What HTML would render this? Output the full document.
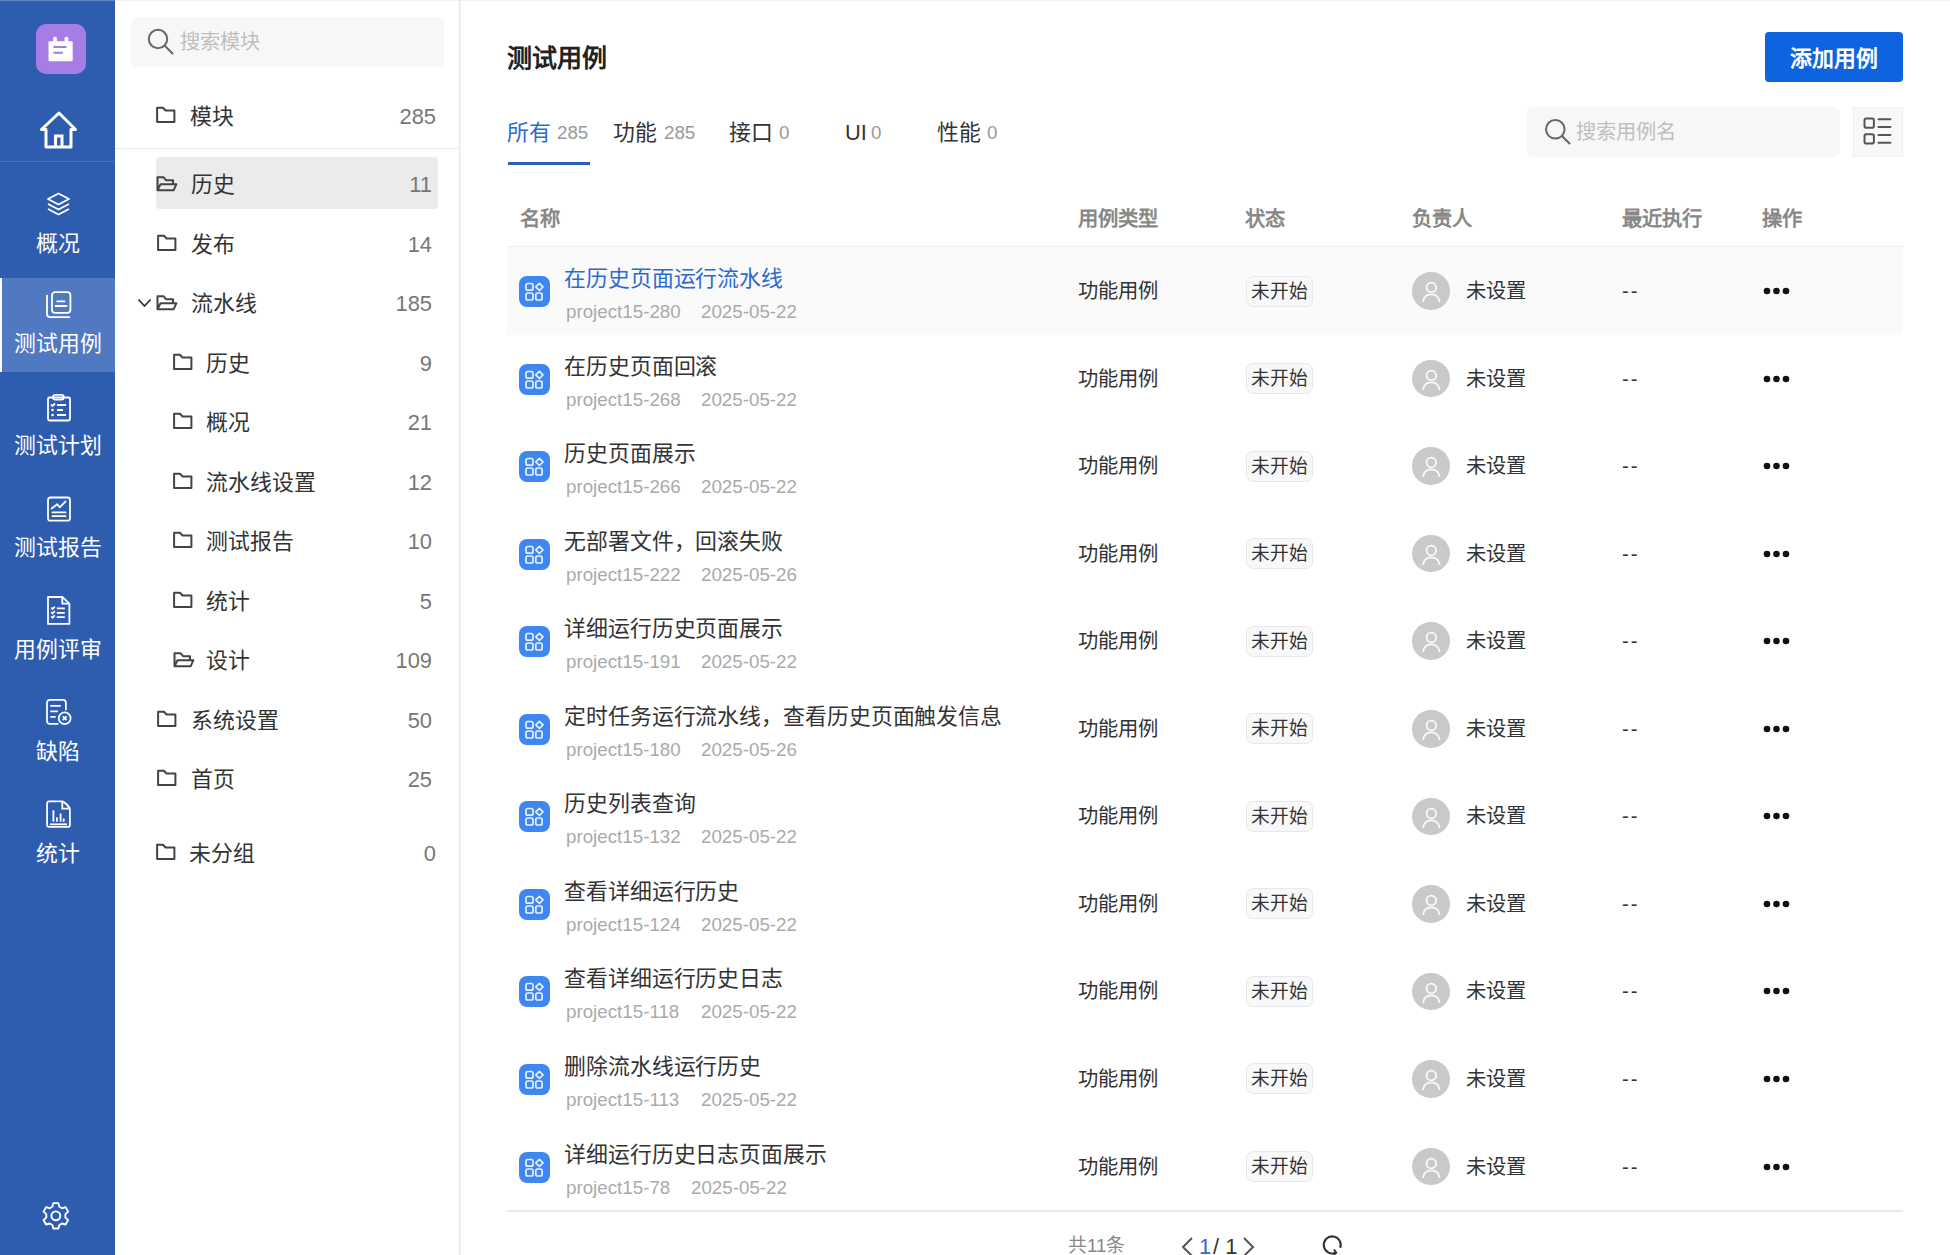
<!DOCTYPE html>
<html lang="zh-CN"><head><meta charset="utf-8"><title>测试用例</title>
<style>
*{box-sizing:border-box;margin:0;padding:0}
html,body{width:1950px;height:1255px;overflow:hidden;background:#fff;font-family:"Liberation Sans",sans-serif;color:#333}
.a{position:absolute;white-space:nowrap}
.t14{font-size:21.875px;line-height:21.875px}
.t13{font-size:20.3125px;line-height:20.3125px}
.t12{font-size:18.75px;line-height:18.75px}
svg{position:absolute;overflow:visible}
</style></head><body>
<div class="a" style="left:0;top:0;width:115px;height:1255px;background:#2e5db0"></div>
<div class="a" style="left:36px;top:24px;width:50px;height:50px;border-radius:10px;background:#a67de4"></div>
<svg style="left:36px;top:24px" width="50" height="50" viewBox="0 0 50 50">
<rect x="12.5" y="17.2" width="24.2" height="20" rx="1.2" fill="#fff"/>
<rect x="17.2" y="12.8" width="3.7" height="6" rx="1.5" fill="#fff"/><rect x="28.6" y="12.8" width="3.7" height="6" rx="1.5" fill="#fff"/>
<rect x="17.2" y="21.9" width="13.6" height="2" rx="1" fill="#a080d0"/><rect x="17.2" y="27.8" width="9.9" height="2" rx="1" fill="#a080d0"/>
</svg>
<svg style="left:39.5px;top:111px" width="38" height="38" viewBox="0 0 38 38">
<path d="M19 2 L35.5 18.5 H31 V36 H6 V18.5 H1.5 Z" fill="none" stroke="#fff" stroke-width="3" stroke-linejoin="round"/>
<path d="M15.5 36 V25 H22 V36" fill="none" stroke="#fff" stroke-width="3"/>
</svg>
<div class="a" style="left:0;top:161px;width:115px;height:1px;background:rgba(255,255,255,0.12)"></div>
<div class="a" style="left:0;top:278px;width:115px;height:94px;background:#5179c1"></div>
<div class="a" style="left:0;top:278px;width:2px;height:94px;background:#fff"></div>
<div class="a t14" style="left:0;width:115px;text-align:center;top:232.5px;color:#fff">概况</div>
<div class="a t14" style="left:0;width:115px;text-align:center;top:332.5px;color:#fff">测试用例</div>
<div class="a t14" style="left:0;width:115px;text-align:center;top:434.5px;color:#fff">测试计划</div>
<div class="a t14" style="left:0;width:115px;text-align:center;top:536.5px;color:#fff">测试报告</div>
<div class="a t14" style="left:0;width:115px;text-align:center;top:638.5px;color:#fff">用例评审</div>
<div class="a t14" style="left:0;width:115px;text-align:center;top:740.5px;color:#fff">缺陷</div>
<div class="a t14" style="left:0;width:115px;text-align:center;top:842.5px;color:#fff">统计</div>
<svg style="left:46px;top:191.7px" width="25" height="25" viewBox="0 0 25 25">
<path d="M12.5 1.5 L23 7 L12.5 12.5 L2 7 Z" fill="none" stroke="#fff" stroke-width="1.8" stroke-linejoin="round"/>
<path d="M2 12 L12.5 17.5 L23 12" fill="none" stroke="#fff" stroke-width="1.8" stroke-linejoin="round"/>
<path d="M2 17 L12.5 22.5 L23 17" fill="none" stroke="#fff" stroke-width="1.8" stroke-linejoin="round"/>
</svg>
<svg style="left:46px;top:290px" width="27" height="30" viewBox="0 0 27 30">
<rect x="6" y="2.1" width="18.4" height="20.8" rx="3.2" fill="none" stroke="#fff" stroke-width="1.8" stroke-width="2.1"/>
<path d="M1 5.6 V24 Q1 27.2 4.2 27.2 H23.3" fill="none" stroke="#fff" stroke-width="1.8" stroke-width="2.1" stroke-linecap="round"/>
<path d="M11.2 11.3 H18.5 M9.6 16 H20.5" fill="none" stroke="#fff" stroke-width="1.8" stroke-width="2.1" stroke-linecap="round"/>
</svg>
<svg style="left:46px;top:393px" width="26" height="29" viewBox="0 0 26 29">
<rect x="2" y="4.5" width="22" height="23" rx="1.5" fill="none" stroke="#fff" stroke-width="1.8"/>
<rect x="7.1" y="1.8" width="10.7" height="4.8" rx="2.3" fill="none" stroke="#fff" stroke-width="1.8" stroke-width="2"/>
<path d="M11 12 H20 M11 17 H17 M11 22 H20" fill="none" stroke="#fff" stroke-width="1.8"/>
<path d="M5 11.5 L6.5 13 L9 10.5" fill="none" stroke="#fff" stroke-width="1.8" stroke-width="1.6"/>
<circle cx="6.5" cy="17" r="1.3" fill="#fff"/><circle cx="6.5" cy="22" r="1.3" fill="#fff"/>
</svg>
<svg style="left:46px;top:496px" width="26" height="27" viewBox="0 0 26 27">
<rect x="2" y="1.5" width="22" height="23.2" rx="2.5" fill="none" stroke="#fff" stroke-width="1.8"/>
<path d="M5.6 12.5 L11.3 8.2 L13.7 11.3 L19.5 5.5" fill="none" stroke="#fff" stroke-width="1.8" stroke-linecap="round" stroke-linejoin="round"/>
<path d="M6.5 16.4 H19.5 M6.5 20.2 H19.5" fill="none" stroke="#fff" stroke-width="1.8" stroke-linecap="round"/>
</svg>
<svg style="left:46px;top:595px" width="26" height="31" viewBox="0 0 26 31">
<path d="M2 2 H16.3 L23.4 8.6 V28.9 H2 Z" fill="none" stroke="#fff" stroke-width="1.8" stroke-linejoin="round"/>
<path d="M16.3 2 V8.6 H23.4" fill="none" stroke="#fff" stroke-width="1.8" stroke-width="1.6"/>
<path d="M10.8 13.3 H18.8 M10.8 17.8 H18.8 M10.8 22.1 H18.8" fill="none" stroke="#fff" stroke-width="1.8"/>
<path d="M5.2 12.6 L6.6 14 L8.8 11.6 M5.2 17.1 L6.6 18.5 L8.8 16.1 M5.2 21.4 L6.6 22.8 L8.8 20.4" fill="none" stroke="#fff" stroke-width="1.8" stroke-width="1.4"/>
</svg>
<svg style="left:46px;top:698px" width="28" height="29" viewBox="0 0 28 29">
<path d="M12.4 25.9 H4 Q1 25.9 1 22.9 V4.9 Q1 1.9 4 1.9 H16.9 Q19.9 1.9 19.9 4.9 V12.2" fill="none" stroke="#fff" stroke-width="1.8"/>
<path d="M5 7.9 H14 M5 13.3 H11.3 M5 18.9 H9" fill="none" stroke="#fff" stroke-width="1.8" stroke-width="2" stroke-linecap="round"/>
<circle cx="18.7" cy="20.2" r="5.9" fill="none" stroke="#fff" stroke-width="1.8"/>
<path d="M16.8 18.3 L20.6 22.1 M20.6 18.3 L16.8 22.1" fill="none" stroke="#fff" stroke-width="1.8" stroke-width="1.6"/>
</svg>
<svg style="left:46px;top:799px" width="26" height="30" viewBox="0 0 26 30">
<path d="M1.1 4.4 Q1.1 2.4 3.1 2.4 H16.3 Q21 4.5 23.9 9.7 V25.9 Q23.9 27.9 21.9 27.9 H3.1 Q1.1 27.9 1.1 25.9 Z" fill="none" stroke="#fff" stroke-width="1.8" stroke-linejoin="round"/>
<path d="M16.3 2.4 V9.7 H23.9" fill="none" stroke="#fff" stroke-width="1.8" stroke-width="1.6"/>
<path d="M7.4 11.3 V22.7 M10.9 18.3 V22.7 M14.6 14.4 V22.7 M17.7 19.5 V22.7" fill="none" stroke="#fff" stroke-width="1.8" stroke-width="2.4"/>
<path d="M3.9 25.3 H21.1" fill="none" stroke="#fff" stroke-width="1.8" stroke-width="2.4"/>
</svg>
<svg style="left:41.45px;top:1201.45px" width="29.7" height="29.7" viewBox="0 0 28 28">
<path d="M11.6 2 H16.4 L17.3 5.4 L19.8 6.8 L23.2 5.8 L25.6 10 L23 12.4 V15.6 L25.6 18 L23.2 22.2 L19.8 21.2 L17.3 22.6 L16.4 26 H11.6 L10.7 22.6 L8.2 21.2 L4.8 22.2 L2.4 18 L5 15.6 V12.4 L2.4 10 L4.8 5.8 L8.2 6.8 L10.7 5.4 Z" fill="none" stroke="#fff" stroke-width="1.8" stroke-linejoin="round"/>
<circle cx="14" cy="14" r="4.2" fill="none" stroke="#fff" stroke-width="1.8"/>
</svg>
<div class="a" style="left:459px;top:0;width:1px;height:1255px;background:#e4e4e4"></div><div class="a" style="left:460px;top:0;width:1px;height:1255px;background:#f5f5f5"></div>
<div class="a" style="left:131px;top:17px;width:313px;height:50px;border-radius:6px;background:#f7f7f7"></div>
<svg style="left:146px;top:27px" width="30" height="30" viewBox="0 0 30 30">
<circle cx="12" cy="12" r="9.2" fill="none" stroke="#666" stroke-width="2" stroke-width="1.8"/><path d="M18.8 18.8 L26.5 26.5" fill="none" stroke="#666" stroke-width="2" stroke-width="1.9" stroke-linecap="round"/>
</svg>
<div class="a t13" style="left:180px;top:32px;color:#bfbfbf">搜索模块</div>
<div class="a" style="left:115px;top:148px;width:344px;height:1px;background:#e8e8e8"></div>
<div class="a" style="left:156px;top:157px;width:282px;height:52px;border-radius:4px;background:#ebebeb"></div>
<svg style="left:156px;top:107px" width="21" height="17" viewBox="0 0 21 17"><path d="M1.1 0.8 H7 L9.5 3.5 H18.4 V15 H1.1 Z" fill="none" stroke="#444" stroke-width="2" stroke-linejoin="round"/></svg>
<div class="a t14" style="left:190px;top:105.5px;color:#333">模块</div>
<div class="a t14" style="right:1514px;top:105.5px;color:#777">285</div>
<svg style="left:156px;top:175px" width="22" height="17" viewBox="0 0 22 17"><path d="M1.5 15.2 V2.2 H7.5 L10 5.2 H17 V9.2 M1.5 15.2 L4.5 9.2 H20.4 L17.7 15.2 Z" fill="none" stroke="#444" stroke-width="2" stroke-linejoin="round"/></svg>
<div class="a t14" style="left:191px;top:173.5px;color:#333">历史</div>
<div class="a t14" style="right:1518px;top:173.5px;color:#777">11</div>
<svg style="left:157px;top:235px" width="21" height="17" viewBox="0 0 21 17"><path d="M1.1 0.8 H7 L9.5 3.5 H18.4 V15 H1.1 Z" fill="none" stroke="#444" stroke-width="2" stroke-linejoin="round"/></svg>
<div class="a t14" style="left:191px;top:233.5px;color:#333">发布</div>
<div class="a t14" style="right:1518px;top:233.5px;color:#777">14</div>
<svg style="left:156px;top:294px" width="22" height="17" viewBox="0 0 22 17"><path d="M1.5 15.2 V2.2 H7.5 L10 5.2 H17 V9.2 M1.5 15.2 L4.5 9.2 H20.4 L17.7 15.2 Z" fill="none" stroke="#444" stroke-width="2" stroke-linejoin="round"/></svg>
<div class="a t14" style="left:191px;top:292.5px;color:#333">流水线</div>
<div class="a t14" style="right:1518px;top:292.5px;color:#777">185</div>
<svg style="left:137px;top:298px" width="15" height="10" viewBox="0 0 15 10"><path d="M1.5 1.5 L7.5 8 L13.5 1.5" fill="none" stroke="#333" stroke-width="1.8"/></svg>
<svg style="left:173px;top:354px" width="21" height="17" viewBox="0 0 21 17"><path d="M1.1 0.8 H7 L9.5 3.5 H18.4 V15 H1.1 Z" fill="none" stroke="#444" stroke-width="2" stroke-linejoin="round"/></svg>
<div class="a t14" style="left:206px;top:352.5px;color:#333">历史</div>
<div class="a t14" style="right:1518px;top:352.5px;color:#777">9</div>
<svg style="left:173px;top:413px" width="21" height="17" viewBox="0 0 21 17"><path d="M1.1 0.8 H7 L9.5 3.5 H18.4 V15 H1.1 Z" fill="none" stroke="#444" stroke-width="2" stroke-linejoin="round"/></svg>
<div class="a t14" style="left:206px;top:411.5px;color:#333">概况</div>
<div class="a t14" style="right:1518px;top:411.5px;color:#777">21</div>
<svg style="left:173px;top:473px" width="21" height="17" viewBox="0 0 21 17"><path d="M1.1 0.8 H7 L9.5 3.5 H18.4 V15 H1.1 Z" fill="none" stroke="#444" stroke-width="2" stroke-linejoin="round"/></svg>
<div class="a t14" style="left:206px;top:471.5px;color:#333">流水线设置</div>
<div class="a t14" style="right:1518px;top:471.5px;color:#777">12</div>
<svg style="left:173px;top:532px" width="21" height="17" viewBox="0 0 21 17"><path d="M1.1 0.8 H7 L9.5 3.5 H18.4 V15 H1.1 Z" fill="none" stroke="#444" stroke-width="2" stroke-linejoin="round"/></svg>
<div class="a t14" style="left:206px;top:530.5px;color:#333">测试报告</div>
<div class="a t14" style="right:1518px;top:530.5px;color:#777">10</div>
<svg style="left:173px;top:592px" width="21" height="17" viewBox="0 0 21 17"><path d="M1.1 0.8 H7 L9.5 3.5 H18.4 V15 H1.1 Z" fill="none" stroke="#444" stroke-width="2" stroke-linejoin="round"/></svg>
<div class="a t14" style="left:206px;top:590.5px;color:#333">统计</div>
<div class="a t14" style="right:1518px;top:590.5px;color:#777">5</div>
<svg style="left:173px;top:651px" width="22" height="17" viewBox="0 0 22 17"><path d="M1.5 15.2 V2.2 H7.5 L10 5.2 H17 V9.2 M1.5 15.2 L4.5 9.2 H20.4 L17.7 15.2 Z" fill="none" stroke="#444" stroke-width="2" stroke-linejoin="round"/></svg>
<div class="a t14" style="left:206px;top:649.5px;color:#333">设计</div>
<div class="a t14" style="right:1518px;top:649.5px;color:#777">109</div>
<svg style="left:157px;top:711px" width="21" height="17" viewBox="0 0 21 17"><path d="M1.1 0.8 H7 L9.5 3.5 H18.4 V15 H1.1 Z" fill="none" stroke="#444" stroke-width="2" stroke-linejoin="round"/></svg>
<div class="a t14" style="left:191px;top:709.5px;color:#333">系统设置</div>
<div class="a t14" style="right:1518px;top:709.5px;color:#777">50</div>
<svg style="left:157px;top:770px" width="21" height="17" viewBox="0 0 21 17"><path d="M1.1 0.8 H7 L9.5 3.5 H18.4 V15 H1.1 Z" fill="none" stroke="#444" stroke-width="2" stroke-linejoin="round"/></svg>
<div class="a t14" style="left:191px;top:768.5px;color:#333">首页</div>
<div class="a t14" style="right:1518px;top:768.5px;color:#777">25</div>
<svg style="left:156px;top:844px" width="21" height="17" viewBox="0 0 21 17"><path d="M1.1 0.8 H7 L9.5 3.5 H18.4 V15 H1.1 Z" fill="none" stroke="#444" stroke-width="2" stroke-linejoin="round"/></svg>
<div class="a t14" style="left:189px;top:842.5px;color:#333">未分组</div>
<div class="a t14" style="right:1514px;top:842.5px;color:#777">0</div>
<div class="a" style="left:0;top:0;width:1950px;height:1px;background:rgba(216,216,216,0.32)"></div>
<div class="a" style="left:507px;top:45.75px;font-size:25px;line-height:25px;font-weight:bold;color:#222">测试用例</div>
<div class="a t14" style="left:1765px;top:31.5px;width:138px;height:50px;line-height:54px;text-align:center;background:#0d64de;border-radius:4px;color:#fff;font-weight:bold">添加用例</div>
<div class="a t14" style="left:507px;top:121.5px;color:#2c6ad0">所有</div>
<div class="a t12" style="left:557px;top:123.5px;color:#999">285</div>
<div class="a t14" style="left:613px;top:121.5px;color:#333">功能</div>
<div class="a t12" style="left:664px;top:123.5px;color:#999">285</div>
<div class="a t14" style="left:729px;top:121.5px;color:#333">接口</div>
<div class="a t12" style="left:779px;top:123.5px;color:#999">0</div>
<div class="a t14" style="left:845px;top:121.5px;color:#333">UI</div>
<div class="a t12" style="left:871px;top:123.5px;color:#999">0</div>
<div class="a t14" style="left:937px;top:121.5px;color:#333">性能</div>
<div class="a t12" style="left:987px;top:123.5px;color:#999">0</div>
<div class="a" style="left:507.5px;top:162.3px;width:82px;height:3px;background:#2c5fb3"></div>
<div class="a" style="left:1527px;top:107px;width:313px;height:50px;border-radius:6px;background:#f7f7f7"></div>
<svg style="left:1543px;top:117px" width="30" height="30" viewBox="0 0 30 30">
<circle cx="12.3" cy="12.3" r="9.3" fill="none" stroke="#666" stroke-width="2" stroke-width="1.9"/><path d="M19.2 19.2 L26.5 26.5" fill="none" stroke="#666" stroke-width="2" stroke-width="2" stroke-linecap="round"/>
</svg>
<div class="a t13" style="left:1576px;top:122px;color:#bfbfbf">搜索用例名</div>
<div class="a" style="left:1853px;top:107px;width:50px;height:50px;background:#f8f8f8;border:1px solid #f0f0f0"></div>
<svg style="left:1863px;top:118px" width="29" height="28" viewBox="0 0 29 28">
<rect x="1.5" y="0.4" width="9.4" height="9.3" rx="1.8" fill="none" stroke="#555" stroke-width="2"/><rect x="1.5" y="16.2" width="9.4" height="9.4" rx="1.8" fill="none" stroke="#555" stroke-width="2"/>
<path d="M15.5 1.2 H27.4 M15.5 8.9 H27.4 M15.5 17 H27.4 M15.5 24.7 H27.4" fill="none" stroke="#555" stroke-width="2" stroke-linecap="round"/>
</svg>
<div class="a t13" style="left:520px;top:208.5px;color:#888;font-weight:bold">名称</div>
<div class="a t13" style="left:1078px;top:208.5px;color:#888;font-weight:bold">用例类型</div>
<div class="a t13" style="left:1245px;top:208.5px;color:#888;font-weight:bold">状态</div>
<div class="a t13" style="left:1412px;top:208.5px;color:#888;font-weight:bold">负责人</div>
<div class="a t13" style="left:1622px;top:208.5px;color:#888;font-weight:bold">最近执行</div>
<div class="a t13" style="left:1762px;top:208.5px;color:#888;font-weight:bold">操作</div>
<div class="a" style="left:507px;top:246px;width:1396px;height:1px;background:#eee"></div>
<div class="a" style="left:507px;top:247.00px;width:1396px;height:87.55px;background:#fafafa"></div>
<div class="a" style="left:519px;top:276.00px;width:31px;height:31px;border-radius:8px;background:#3f87f0"></div>
<svg style="left:519px;top:276.00px" width="31" height="31" viewBox="0 0 31 31">
<rect x="7" y="7.5" width="7" height="6.7" rx="1.8" fill="none" stroke="#e8f0ff" stroke-width="1.7"/>
<rect x="7" y="17" width="7" height="7" rx="1.8" fill="none" stroke="#e8f0ff" stroke-width="1.7"/>
<rect x="16.8" y="17" width="6.3" height="7" rx="1.8" fill="none" stroke="#e8f0ff" stroke-width="1.7"/>
<path d="M20.4 7.3 L24 10.9 L20.4 14.5 L16.8 10.9 Z" fill="none" stroke="#e8f0ff" stroke-width="1.7" stroke-linejoin="round"/>
</svg>
<div class="a t14" style="left:564px;top:268.00px;color:#2c6ad0;letter-spacing:-0.1px">在历史页面运行流水线</div>
<div class="a t12" style="left:566px;top:303.00px;color:#aaa">project15-280</div>
<div class="a t12" style="left:701px;top:303.00px;color:#aaa">2025-05-22</div>
<div class="a t13" style="left:1078px;top:281.00px;color:#333">功能用例</div>
<div class="a t12" style="left:1246px;top:275.50px;width:67px;height:31px;line-height:29px;text-align:center;border:1px solid #e8e8ec;background:#f8f8f9;border-radius:7px;color:#333">未开始</div>
<div class="a" style="left:1412px;top:272.25px;width:37.5px;height:37.5px;border-radius:50%;background:#c9c9c9"></div>
<svg style="left:1412px;top:272.25px" width="37.5" height="37.5" viewBox="0 0 37.5 37.5">
<circle cx="19.3" cy="15.5" r="4.8" fill="none" stroke="#fafafa" stroke-width="1.8"/>
<path d="M11.1 30 Q11.8 22.3 19.3 22.3 Q26.8 22.3 27.6 30" fill="none" stroke="#fafafa" stroke-width="1.8"/>
</svg>
<div class="a t13" style="left:1466px;top:281.00px;color:#333">未设置</div>
<div class="a t13" style="left:1622px;top:281.00px;color:#333;letter-spacing:2px">--</div>
<svg style="left:1763px;top:287.00px" width="28" height="8" viewBox="0 0 28 8">
<circle cx="4" cy="4" r="3.3" fill="#111"/><circle cx="13.5" cy="4" r="3.3" fill="#111"/><circle cx="23" cy="4" r="3.3" fill="#111"/>
</svg>
<div class="a" style="left:519px;top:363.55px;width:31px;height:31px;border-radius:8px;background:#3f87f0"></div>
<svg style="left:519px;top:363.55px" width="31" height="31" viewBox="0 0 31 31">
<rect x="7" y="7.5" width="7" height="6.7" rx="1.8" fill="none" stroke="#e8f0ff" stroke-width="1.7"/>
<rect x="7" y="17" width="7" height="7" rx="1.8" fill="none" stroke="#e8f0ff" stroke-width="1.7"/>
<rect x="16.8" y="17" width="6.3" height="7" rx="1.8" fill="none" stroke="#e8f0ff" stroke-width="1.7"/>
<path d="M20.4 7.3 L24 10.9 L20.4 14.5 L16.8 10.9 Z" fill="none" stroke="#e8f0ff" stroke-width="1.7" stroke-linejoin="round"/>
</svg>
<div class="a t14" style="left:564px;top:355.55px;color:#333;letter-spacing:-0.1px">在历史页面回滚</div>
<div class="a t12" style="left:566px;top:390.55px;color:#aaa">project15-268</div>
<div class="a t12" style="left:701px;top:390.55px;color:#aaa">2025-05-22</div>
<div class="a t13" style="left:1078px;top:368.55px;color:#333">功能用例</div>
<div class="a t12" style="left:1246px;top:363.05px;width:67px;height:31px;line-height:29px;text-align:center;border:1px solid #e8e8ec;background:#f8f8f9;border-radius:7px;color:#333">未开始</div>
<div class="a" style="left:1412px;top:359.80px;width:37.5px;height:37.5px;border-radius:50%;background:#c9c9c9"></div>
<svg style="left:1412px;top:359.80px" width="37.5" height="37.5" viewBox="0 0 37.5 37.5">
<circle cx="19.3" cy="15.5" r="4.8" fill="none" stroke="#fafafa" stroke-width="1.8"/>
<path d="M11.1 30 Q11.8 22.3 19.3 22.3 Q26.8 22.3 27.6 30" fill="none" stroke="#fafafa" stroke-width="1.8"/>
</svg>
<div class="a t13" style="left:1466px;top:368.55px;color:#333">未设置</div>
<div class="a t13" style="left:1622px;top:368.55px;color:#333;letter-spacing:2px">--</div>
<svg style="left:1763px;top:374.55px" width="28" height="8" viewBox="0 0 28 8">
<circle cx="4" cy="4" r="3.3" fill="#111"/><circle cx="13.5" cy="4" r="3.3" fill="#111"/><circle cx="23" cy="4" r="3.3" fill="#111"/>
</svg>
<div class="a" style="left:519px;top:451.10px;width:31px;height:31px;border-radius:8px;background:#3f87f0"></div>
<svg style="left:519px;top:451.10px" width="31" height="31" viewBox="0 0 31 31">
<rect x="7" y="7.5" width="7" height="6.7" rx="1.8" fill="none" stroke="#e8f0ff" stroke-width="1.7"/>
<rect x="7" y="17" width="7" height="7" rx="1.8" fill="none" stroke="#e8f0ff" stroke-width="1.7"/>
<rect x="16.8" y="17" width="6.3" height="7" rx="1.8" fill="none" stroke="#e8f0ff" stroke-width="1.7"/>
<path d="M20.4 7.3 L24 10.9 L20.4 14.5 L16.8 10.9 Z" fill="none" stroke="#e8f0ff" stroke-width="1.7" stroke-linejoin="round"/>
</svg>
<div class="a t14" style="left:564px;top:443.10px;color:#333;letter-spacing:-0.1px">历史页面展示</div>
<div class="a t12" style="left:566px;top:478.10px;color:#aaa">project15-266</div>
<div class="a t12" style="left:701px;top:478.10px;color:#aaa">2025-05-22</div>
<div class="a t13" style="left:1078px;top:456.10px;color:#333">功能用例</div>
<div class="a t12" style="left:1246px;top:450.60px;width:67px;height:31px;line-height:29px;text-align:center;border:1px solid #e8e8ec;background:#f8f8f9;border-radius:7px;color:#333">未开始</div>
<div class="a" style="left:1412px;top:447.35px;width:37.5px;height:37.5px;border-radius:50%;background:#c9c9c9"></div>
<svg style="left:1412px;top:447.35px" width="37.5" height="37.5" viewBox="0 0 37.5 37.5">
<circle cx="19.3" cy="15.5" r="4.8" fill="none" stroke="#fafafa" stroke-width="1.8"/>
<path d="M11.1 30 Q11.8 22.3 19.3 22.3 Q26.8 22.3 27.6 30" fill="none" stroke="#fafafa" stroke-width="1.8"/>
</svg>
<div class="a t13" style="left:1466px;top:456.10px;color:#333">未设置</div>
<div class="a t13" style="left:1622px;top:456.10px;color:#333;letter-spacing:2px">--</div>
<svg style="left:1763px;top:462.10px" width="28" height="8" viewBox="0 0 28 8">
<circle cx="4" cy="4" r="3.3" fill="#111"/><circle cx="13.5" cy="4" r="3.3" fill="#111"/><circle cx="23" cy="4" r="3.3" fill="#111"/>
</svg>
<div class="a" style="left:519px;top:538.65px;width:31px;height:31px;border-radius:8px;background:#3f87f0"></div>
<svg style="left:519px;top:538.65px" width="31" height="31" viewBox="0 0 31 31">
<rect x="7" y="7.5" width="7" height="6.7" rx="1.8" fill="none" stroke="#e8f0ff" stroke-width="1.7"/>
<rect x="7" y="17" width="7" height="7" rx="1.8" fill="none" stroke="#e8f0ff" stroke-width="1.7"/>
<rect x="16.8" y="17" width="6.3" height="7" rx="1.8" fill="none" stroke="#e8f0ff" stroke-width="1.7"/>
<path d="M20.4 7.3 L24 10.9 L20.4 14.5 L16.8 10.9 Z" fill="none" stroke="#e8f0ff" stroke-width="1.7" stroke-linejoin="round"/>
</svg>
<div class="a t14" style="left:564px;top:530.65px;color:#333;letter-spacing:-0.1px">无部署文件，回滚失败</div>
<div class="a t12" style="left:566px;top:565.65px;color:#aaa">project15-222</div>
<div class="a t12" style="left:701px;top:565.65px;color:#aaa">2025-05-26</div>
<div class="a t13" style="left:1078px;top:543.65px;color:#333">功能用例</div>
<div class="a t12" style="left:1246px;top:538.15px;width:67px;height:31px;line-height:29px;text-align:center;border:1px solid #e8e8ec;background:#f8f8f9;border-radius:7px;color:#333">未开始</div>
<div class="a" style="left:1412px;top:534.90px;width:37.5px;height:37.5px;border-radius:50%;background:#c9c9c9"></div>
<svg style="left:1412px;top:534.90px" width="37.5" height="37.5" viewBox="0 0 37.5 37.5">
<circle cx="19.3" cy="15.5" r="4.8" fill="none" stroke="#fafafa" stroke-width="1.8"/>
<path d="M11.1 30 Q11.8 22.3 19.3 22.3 Q26.8 22.3 27.6 30" fill="none" stroke="#fafafa" stroke-width="1.8"/>
</svg>
<div class="a t13" style="left:1466px;top:543.65px;color:#333">未设置</div>
<div class="a t13" style="left:1622px;top:543.65px;color:#333;letter-spacing:2px">--</div>
<svg style="left:1763px;top:549.65px" width="28" height="8" viewBox="0 0 28 8">
<circle cx="4" cy="4" r="3.3" fill="#111"/><circle cx="13.5" cy="4" r="3.3" fill="#111"/><circle cx="23" cy="4" r="3.3" fill="#111"/>
</svg>
<div class="a" style="left:519px;top:626.20px;width:31px;height:31px;border-radius:8px;background:#3f87f0"></div>
<svg style="left:519px;top:626.20px" width="31" height="31" viewBox="0 0 31 31">
<rect x="7" y="7.5" width="7" height="6.7" rx="1.8" fill="none" stroke="#e8f0ff" stroke-width="1.7"/>
<rect x="7" y="17" width="7" height="7" rx="1.8" fill="none" stroke="#e8f0ff" stroke-width="1.7"/>
<rect x="16.8" y="17" width="6.3" height="7" rx="1.8" fill="none" stroke="#e8f0ff" stroke-width="1.7"/>
<path d="M20.4 7.3 L24 10.9 L20.4 14.5 L16.8 10.9 Z" fill="none" stroke="#e8f0ff" stroke-width="1.7" stroke-linejoin="round"/>
</svg>
<div class="a t14" style="left:564px;top:618.20px;color:#333;letter-spacing:-0.1px">详细运行历史页面展示</div>
<div class="a t12" style="left:566px;top:653.20px;color:#aaa">project15-191</div>
<div class="a t12" style="left:701px;top:653.20px;color:#aaa">2025-05-22</div>
<div class="a t13" style="left:1078px;top:631.20px;color:#333">功能用例</div>
<div class="a t12" style="left:1246px;top:625.70px;width:67px;height:31px;line-height:29px;text-align:center;border:1px solid #e8e8ec;background:#f8f8f9;border-radius:7px;color:#333">未开始</div>
<div class="a" style="left:1412px;top:622.45px;width:37.5px;height:37.5px;border-radius:50%;background:#c9c9c9"></div>
<svg style="left:1412px;top:622.45px" width="37.5" height="37.5" viewBox="0 0 37.5 37.5">
<circle cx="19.3" cy="15.5" r="4.8" fill="none" stroke="#fafafa" stroke-width="1.8"/>
<path d="M11.1 30 Q11.8 22.3 19.3 22.3 Q26.8 22.3 27.6 30" fill="none" stroke="#fafafa" stroke-width="1.8"/>
</svg>
<div class="a t13" style="left:1466px;top:631.20px;color:#333">未设置</div>
<div class="a t13" style="left:1622px;top:631.20px;color:#333;letter-spacing:2px">--</div>
<svg style="left:1763px;top:637.20px" width="28" height="8" viewBox="0 0 28 8">
<circle cx="4" cy="4" r="3.3" fill="#111"/><circle cx="13.5" cy="4" r="3.3" fill="#111"/><circle cx="23" cy="4" r="3.3" fill="#111"/>
</svg>
<div class="a" style="left:519px;top:713.75px;width:31px;height:31px;border-radius:8px;background:#3f87f0"></div>
<svg style="left:519px;top:713.75px" width="31" height="31" viewBox="0 0 31 31">
<rect x="7" y="7.5" width="7" height="6.7" rx="1.8" fill="none" stroke="#e8f0ff" stroke-width="1.7"/>
<rect x="7" y="17" width="7" height="7" rx="1.8" fill="none" stroke="#e8f0ff" stroke-width="1.7"/>
<rect x="16.8" y="17" width="6.3" height="7" rx="1.8" fill="none" stroke="#e8f0ff" stroke-width="1.7"/>
<path d="M20.4 7.3 L24 10.9 L20.4 14.5 L16.8 10.9 Z" fill="none" stroke="#e8f0ff" stroke-width="1.7" stroke-linejoin="round"/>
</svg>
<div class="a t14" style="left:564px;top:705.75px;color:#333;letter-spacing:-0.1px">定时任务运行流水线，查看历史页面触发信息</div>
<div class="a t12" style="left:566px;top:740.75px;color:#aaa">project15-180</div>
<div class="a t12" style="left:701px;top:740.75px;color:#aaa">2025-05-26</div>
<div class="a t13" style="left:1078px;top:718.75px;color:#333">功能用例</div>
<div class="a t12" style="left:1246px;top:713.25px;width:67px;height:31px;line-height:29px;text-align:center;border:1px solid #e8e8ec;background:#f8f8f9;border-radius:7px;color:#333">未开始</div>
<div class="a" style="left:1412px;top:710.00px;width:37.5px;height:37.5px;border-radius:50%;background:#c9c9c9"></div>
<svg style="left:1412px;top:710.00px" width="37.5" height="37.5" viewBox="0 0 37.5 37.5">
<circle cx="19.3" cy="15.5" r="4.8" fill="none" stroke="#fafafa" stroke-width="1.8"/>
<path d="M11.1 30 Q11.8 22.3 19.3 22.3 Q26.8 22.3 27.6 30" fill="none" stroke="#fafafa" stroke-width="1.8"/>
</svg>
<div class="a t13" style="left:1466px;top:718.75px;color:#333">未设置</div>
<div class="a t13" style="left:1622px;top:718.75px;color:#333;letter-spacing:2px">--</div>
<svg style="left:1763px;top:724.75px" width="28" height="8" viewBox="0 0 28 8">
<circle cx="4" cy="4" r="3.3" fill="#111"/><circle cx="13.5" cy="4" r="3.3" fill="#111"/><circle cx="23" cy="4" r="3.3" fill="#111"/>
</svg>
<div class="a" style="left:519px;top:801.30px;width:31px;height:31px;border-radius:8px;background:#3f87f0"></div>
<svg style="left:519px;top:801.30px" width="31" height="31" viewBox="0 0 31 31">
<rect x="7" y="7.5" width="7" height="6.7" rx="1.8" fill="none" stroke="#e8f0ff" stroke-width="1.7"/>
<rect x="7" y="17" width="7" height="7" rx="1.8" fill="none" stroke="#e8f0ff" stroke-width="1.7"/>
<rect x="16.8" y="17" width="6.3" height="7" rx="1.8" fill="none" stroke="#e8f0ff" stroke-width="1.7"/>
<path d="M20.4 7.3 L24 10.9 L20.4 14.5 L16.8 10.9 Z" fill="none" stroke="#e8f0ff" stroke-width="1.7" stroke-linejoin="round"/>
</svg>
<div class="a t14" style="left:564px;top:793.30px;color:#333;letter-spacing:-0.1px">历史列表查询</div>
<div class="a t12" style="left:566px;top:828.30px;color:#aaa">project15-132</div>
<div class="a t12" style="left:701px;top:828.30px;color:#aaa">2025-05-22</div>
<div class="a t13" style="left:1078px;top:806.30px;color:#333">功能用例</div>
<div class="a t12" style="left:1246px;top:800.80px;width:67px;height:31px;line-height:29px;text-align:center;border:1px solid #e8e8ec;background:#f8f8f9;border-radius:7px;color:#333">未开始</div>
<div class="a" style="left:1412px;top:797.55px;width:37.5px;height:37.5px;border-radius:50%;background:#c9c9c9"></div>
<svg style="left:1412px;top:797.55px" width="37.5" height="37.5" viewBox="0 0 37.5 37.5">
<circle cx="19.3" cy="15.5" r="4.8" fill="none" stroke="#fafafa" stroke-width="1.8"/>
<path d="M11.1 30 Q11.8 22.3 19.3 22.3 Q26.8 22.3 27.6 30" fill="none" stroke="#fafafa" stroke-width="1.8"/>
</svg>
<div class="a t13" style="left:1466px;top:806.30px;color:#333">未设置</div>
<div class="a t13" style="left:1622px;top:806.30px;color:#333;letter-spacing:2px">--</div>
<svg style="left:1763px;top:812.30px" width="28" height="8" viewBox="0 0 28 8">
<circle cx="4" cy="4" r="3.3" fill="#111"/><circle cx="13.5" cy="4" r="3.3" fill="#111"/><circle cx="23" cy="4" r="3.3" fill="#111"/>
</svg>
<div class="a" style="left:519px;top:888.85px;width:31px;height:31px;border-radius:8px;background:#3f87f0"></div>
<svg style="left:519px;top:888.85px" width="31" height="31" viewBox="0 0 31 31">
<rect x="7" y="7.5" width="7" height="6.7" rx="1.8" fill="none" stroke="#e8f0ff" stroke-width="1.7"/>
<rect x="7" y="17" width="7" height="7" rx="1.8" fill="none" stroke="#e8f0ff" stroke-width="1.7"/>
<rect x="16.8" y="17" width="6.3" height="7" rx="1.8" fill="none" stroke="#e8f0ff" stroke-width="1.7"/>
<path d="M20.4 7.3 L24 10.9 L20.4 14.5 L16.8 10.9 Z" fill="none" stroke="#e8f0ff" stroke-width="1.7" stroke-linejoin="round"/>
</svg>
<div class="a t14" style="left:564px;top:880.85px;color:#333;letter-spacing:-0.1px">查看详细运行历史</div>
<div class="a t12" style="left:566px;top:915.85px;color:#aaa">project15-124</div>
<div class="a t12" style="left:701px;top:915.85px;color:#aaa">2025-05-22</div>
<div class="a t13" style="left:1078px;top:893.85px;color:#333">功能用例</div>
<div class="a t12" style="left:1246px;top:888.35px;width:67px;height:31px;line-height:29px;text-align:center;border:1px solid #e8e8ec;background:#f8f8f9;border-radius:7px;color:#333">未开始</div>
<div class="a" style="left:1412px;top:885.10px;width:37.5px;height:37.5px;border-radius:50%;background:#c9c9c9"></div>
<svg style="left:1412px;top:885.10px" width="37.5" height="37.5" viewBox="0 0 37.5 37.5">
<circle cx="19.3" cy="15.5" r="4.8" fill="none" stroke="#fafafa" stroke-width="1.8"/>
<path d="M11.1 30 Q11.8 22.3 19.3 22.3 Q26.8 22.3 27.6 30" fill="none" stroke="#fafafa" stroke-width="1.8"/>
</svg>
<div class="a t13" style="left:1466px;top:893.85px;color:#333">未设置</div>
<div class="a t13" style="left:1622px;top:893.85px;color:#333;letter-spacing:2px">--</div>
<svg style="left:1763px;top:899.85px" width="28" height="8" viewBox="0 0 28 8">
<circle cx="4" cy="4" r="3.3" fill="#111"/><circle cx="13.5" cy="4" r="3.3" fill="#111"/><circle cx="23" cy="4" r="3.3" fill="#111"/>
</svg>
<div class="a" style="left:519px;top:976.40px;width:31px;height:31px;border-radius:8px;background:#3f87f0"></div>
<svg style="left:519px;top:976.40px" width="31" height="31" viewBox="0 0 31 31">
<rect x="7" y="7.5" width="7" height="6.7" rx="1.8" fill="none" stroke="#e8f0ff" stroke-width="1.7"/>
<rect x="7" y="17" width="7" height="7" rx="1.8" fill="none" stroke="#e8f0ff" stroke-width="1.7"/>
<rect x="16.8" y="17" width="6.3" height="7" rx="1.8" fill="none" stroke="#e8f0ff" stroke-width="1.7"/>
<path d="M20.4 7.3 L24 10.9 L20.4 14.5 L16.8 10.9 Z" fill="none" stroke="#e8f0ff" stroke-width="1.7" stroke-linejoin="round"/>
</svg>
<div class="a t14" style="left:564px;top:968.40px;color:#333;letter-spacing:-0.1px">查看详细运行历史日志</div>
<div class="a t12" style="left:566px;top:1003.40px;color:#aaa">project15-118</div>
<div class="a t12" style="left:701px;top:1003.40px;color:#aaa">2025-05-22</div>
<div class="a t13" style="left:1078px;top:981.40px;color:#333">功能用例</div>
<div class="a t12" style="left:1246px;top:975.90px;width:67px;height:31px;line-height:29px;text-align:center;border:1px solid #e8e8ec;background:#f8f8f9;border-radius:7px;color:#333">未开始</div>
<div class="a" style="left:1412px;top:972.65px;width:37.5px;height:37.5px;border-radius:50%;background:#c9c9c9"></div>
<svg style="left:1412px;top:972.65px" width="37.5" height="37.5" viewBox="0 0 37.5 37.5">
<circle cx="19.3" cy="15.5" r="4.8" fill="none" stroke="#fafafa" stroke-width="1.8"/>
<path d="M11.1 30 Q11.8 22.3 19.3 22.3 Q26.8 22.3 27.6 30" fill="none" stroke="#fafafa" stroke-width="1.8"/>
</svg>
<div class="a t13" style="left:1466px;top:981.40px;color:#333">未设置</div>
<div class="a t13" style="left:1622px;top:981.40px;color:#333;letter-spacing:2px">--</div>
<svg style="left:1763px;top:987.40px" width="28" height="8" viewBox="0 0 28 8">
<circle cx="4" cy="4" r="3.3" fill="#111"/><circle cx="13.5" cy="4" r="3.3" fill="#111"/><circle cx="23" cy="4" r="3.3" fill="#111"/>
</svg>
<div class="a" style="left:519px;top:1063.95px;width:31px;height:31px;border-radius:8px;background:#3f87f0"></div>
<svg style="left:519px;top:1063.95px" width="31" height="31" viewBox="0 0 31 31">
<rect x="7" y="7.5" width="7" height="6.7" rx="1.8" fill="none" stroke="#e8f0ff" stroke-width="1.7"/>
<rect x="7" y="17" width="7" height="7" rx="1.8" fill="none" stroke="#e8f0ff" stroke-width="1.7"/>
<rect x="16.8" y="17" width="6.3" height="7" rx="1.8" fill="none" stroke="#e8f0ff" stroke-width="1.7"/>
<path d="M20.4 7.3 L24 10.9 L20.4 14.5 L16.8 10.9 Z" fill="none" stroke="#e8f0ff" stroke-width="1.7" stroke-linejoin="round"/>
</svg>
<div class="a t14" style="left:564px;top:1055.95px;color:#333;letter-spacing:-0.1px">删除流水线运行历史</div>
<div class="a t12" style="left:566px;top:1090.95px;color:#aaa">project15-113</div>
<div class="a t12" style="left:701px;top:1090.95px;color:#aaa">2025-05-22</div>
<div class="a t13" style="left:1078px;top:1068.95px;color:#333">功能用例</div>
<div class="a t12" style="left:1246px;top:1063.45px;width:67px;height:31px;line-height:29px;text-align:center;border:1px solid #e8e8ec;background:#f8f8f9;border-radius:7px;color:#333">未开始</div>
<div class="a" style="left:1412px;top:1060.20px;width:37.5px;height:37.5px;border-radius:50%;background:#c9c9c9"></div>
<svg style="left:1412px;top:1060.20px" width="37.5" height="37.5" viewBox="0 0 37.5 37.5">
<circle cx="19.3" cy="15.5" r="4.8" fill="none" stroke="#fafafa" stroke-width="1.8"/>
<path d="M11.1 30 Q11.8 22.3 19.3 22.3 Q26.8 22.3 27.6 30" fill="none" stroke="#fafafa" stroke-width="1.8"/>
</svg>
<div class="a t13" style="left:1466px;top:1068.95px;color:#333">未设置</div>
<div class="a t13" style="left:1622px;top:1068.95px;color:#333;letter-spacing:2px">--</div>
<svg style="left:1763px;top:1074.95px" width="28" height="8" viewBox="0 0 28 8">
<circle cx="4" cy="4" r="3.3" fill="#111"/><circle cx="13.5" cy="4" r="3.3" fill="#111"/><circle cx="23" cy="4" r="3.3" fill="#111"/>
</svg>
<div class="a" style="left:519px;top:1151.50px;width:31px;height:31px;border-radius:8px;background:#3f87f0"></div>
<svg style="left:519px;top:1151.50px" width="31" height="31" viewBox="0 0 31 31">
<rect x="7" y="7.5" width="7" height="6.7" rx="1.8" fill="none" stroke="#e8f0ff" stroke-width="1.7"/>
<rect x="7" y="17" width="7" height="7" rx="1.8" fill="none" stroke="#e8f0ff" stroke-width="1.7"/>
<rect x="16.8" y="17" width="6.3" height="7" rx="1.8" fill="none" stroke="#e8f0ff" stroke-width="1.7"/>
<path d="M20.4 7.3 L24 10.9 L20.4 14.5 L16.8 10.9 Z" fill="none" stroke="#e8f0ff" stroke-width="1.7" stroke-linejoin="round"/>
</svg>
<div class="a t14" style="left:564px;top:1143.50px;color:#333;letter-spacing:-0.1px">详细运行历史日志页面展示</div>
<div class="a t12" style="left:566px;top:1178.50px;color:#aaa">project15-78</div>
<div class="a t12" style="left:691px;top:1178.50px;color:#aaa">2025-05-22</div>
<div class="a t13" style="left:1078px;top:1156.50px;color:#333">功能用例</div>
<div class="a t12" style="left:1246px;top:1151.00px;width:67px;height:31px;line-height:29px;text-align:center;border:1px solid #e8e8ec;background:#f8f8f9;border-radius:7px;color:#333">未开始</div>
<div class="a" style="left:1412px;top:1147.75px;width:37.5px;height:37.5px;border-radius:50%;background:#c9c9c9"></div>
<svg style="left:1412px;top:1147.75px" width="37.5" height="37.5" viewBox="0 0 37.5 37.5">
<circle cx="19.3" cy="15.5" r="4.8" fill="none" stroke="#fafafa" stroke-width="1.8"/>
<path d="M11.1 30 Q11.8 22.3 19.3 22.3 Q26.8 22.3 27.6 30" fill="none" stroke="#fafafa" stroke-width="1.8"/>
</svg>
<div class="a t13" style="left:1466px;top:1156.50px;color:#333">未设置</div>
<div class="a t13" style="left:1622px;top:1156.50px;color:#333;letter-spacing:2px">--</div>
<svg style="left:1763px;top:1162.50px" width="28" height="8" viewBox="0 0 28 8">
<circle cx="4" cy="4" r="3.3" fill="#111"/><circle cx="13.5" cy="4" r="3.3" fill="#111"/><circle cx="23" cy="4" r="3.3" fill="#111"/>
</svg>
<div class="a" style="left:507px;top:1210px;width:1396px;height:2px;background:#e8e8e8"></div>
<div class="a t12" style="left:1068px;top:1237px;color:#888">共11条</div>
<svg style="left:1180px;top:1236px" width="14" height="22" viewBox="0 0 14 22"><path d="M12 2 L3 11 L12 20" fill="none" stroke="#555" stroke-width="2"/></svg>
<div class="a t14" style="left:1199px;top:1236px;color:#2c6ad0">1</div>
<div class="a t14" style="left:1213px;top:1236px;color:#333">/ 1</div>
<svg style="left:1242px;top:1236px" width="14" height="22" viewBox="0 0 14 22"><path d="M2 2 L11 11 L2 20" fill="none" stroke="#555" stroke-width="2"/></svg>
<svg style="left:1321px;top:1234px" width="22" height="22" viewBox="0 0 22 22"><path d="M19.2 13.9 A8.5 8.5 0 1 0 14.6 18.7" fill="none" stroke="#333" stroke-width="2.1"/><path d="M13 15.5 L15.2 18.8 L12.5 21" fill="none" stroke="#333" stroke-width="2"/></svg>
</body></html>
